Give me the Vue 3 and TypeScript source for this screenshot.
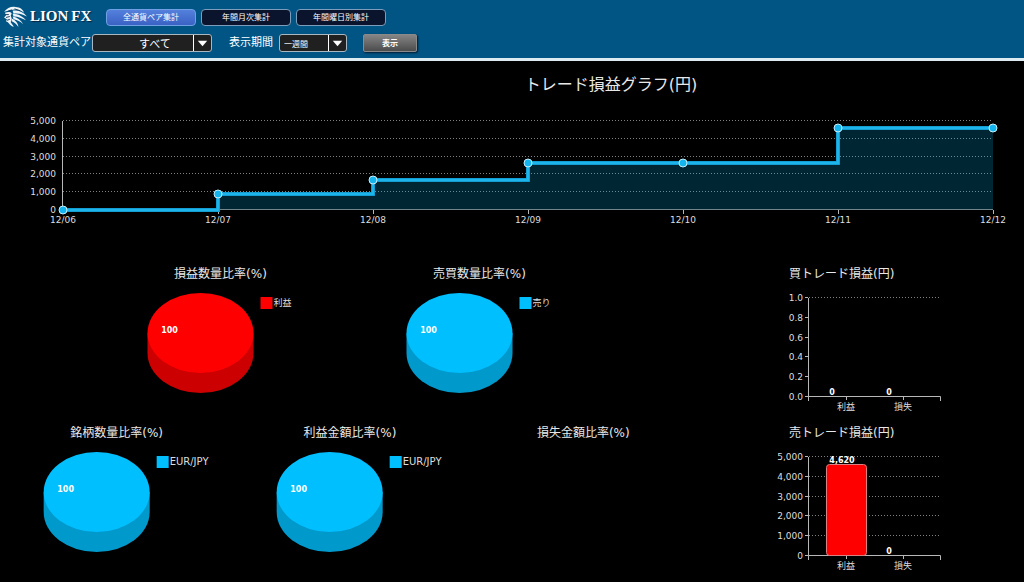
<script setup lang="ts">
import { ref } from 'vue'

interface Pie { title: string; legend?: string; color?: string; side?: string; latin?: boolean }
interface Bar { name: string; value: number; label: string }
interface BarChart { title: string; ticks: string[]; max: number; dottedTicks: boolean; bars: Bar[] }

const tabs = ['全通貨ペア集計', '年間月次集計', '年間曜日別集計']
const activeTab = ref(0)
const pair = ref('すべて')
const period = ref('一週間')

const days = ['12/06', '12/07', '12/08', '12/09', '12/10', '12/11', '12/12']
const profits = [0, 900, 1690, 2620, 2620, 4620, 4620]
const left = 63
const step = 155
const base = 113
const px = (i: number) => left + i * step
const py = (v: number) => Math.round(base - (v / 5000) * 89)
const points = profits.map((v, i) => ({ x: px(i), y: py(v), day: days[i] }))
const line = points.map((p, i) => (i === 0 ? `M${p.x} ${p.y}` : `H${p.x}V${p.y}`)).join('')
const area = `${line}V${base}H${left}Z`
const gridValues = [5000, 4000, 3000, 2000, 1000, 0]

const blue = { color: '#00bfff', side: '#0099cc' }
const pieRows: Pie[][] = [
  [
    { title: '損益数量比率(%)', legend: '利益', color: '#ff0000', side: '#cc0000' },
    { title: '売買数量比率(%)', legend: '売り', ...blue },
  ],
  [
    { title: '銘柄数量比率(%)', legend: 'EUR/JPY', latin: true, ...blue },
    { title: '利益金額比率(%)', legend: 'EUR/JPY', latin: true, ...blue },
    { title: '損失金額比率(%)' },
  ],
]

const barCharts: BarChart[] = [
  {
    title: '買トレード損益(円)',
    ticks: ['1.0', '0.8', '0.6', '0.4', '0.2', '0.0'],
    max: 1,
    dottedTicks: false,
    bars: [{ name: '利益', value: 0, label: '0' }, { name: '損失', value: 0, label: '0' }],
  },
  {
    title: '売トレード損益(円)',
    ticks: ['5,000', '4,000', '3,000', '2,000', '1,000', '0'],
    max: 5000,
    dottedTicks: true,
    bars: [{ name: '利益', value: 4620, label: '4,620' }, { name: '損失', value: 0, label: '0' }],
  },
]
const barHeight = (b: Bar, max: number) => Math.round((b.value / max) * 99)
const tickY = (i: number) => Math.round(16 + i * 19.8)
</script>

<template>
  <div class="page">
    <header class="bar">
      <div class="row top">
        <div class="logo">
          <svg class="lion" viewBox="0 0 26 22" aria-hidden="true">
            <g fill="#eef4f8">
              <path d="M1 6C4 2 9 0 13 1c5 0 8 3 9 6-4-3-8-4-12-3C6 4 4 6 1 6z" />
              <path d="M10 5c5-1 11 1 15 6-4-2-8-4-14-3z" />
              <path d="M10 8c6 0 11 3 14 7-4-2-8-4-13-4z" />
              <path d="M10 11c5 1 9 4 11 8-3-3-6-4-10-5z" />
              <path d="M9 13c4 2 7 5 7 9-2-3-4-5-7-6z" />
              <path d="M2 7c3-1 6-1 7 1l-1 2 1 3-1 4c1 2 3 3 3 5-3-1-5-4-6-5l-2-1 1-2-3-2 2-2z" />
            </g>
            <path d="M2 9l4 0M3 12l4-1M4 6l5-2M4 15l3-1M12 3l6 2" stroke="#1b3f5a" fill="none" />
          </svg>
          <span class="brand"><span>LION</span><span>FX</span></span>
        </div>
        <nav class="tabs">
          <button
            v-for="(t, i) in tabs"
            :key="t"
            type="button"
            class="tab"
            :class="{ active: i === activeTab }"
            @click="activeTab = i"
          >{{ t }}</button>
        </nav>
      </div>
      <form class="row filters" @submit.prevent>
        <label for="pair">集計対象通貨ペア</label>
        <span class="pick pair">
          <select id="pair" v-model="pair"><option>すべて</option></select>
          <svg class="arrow" viewBox="0 0 18 15" aria-hidden="true"><path d="M4 5h10l-5 6z" fill="#fff" /></svg>
        </span>
        <label class="period-label" for="period">表示期間</label>
        <span class="pick period">
          <select id="period" v-model="period"><option>一週間</option></select>
          <svg class="arrow" viewBox="0 0 18 15" aria-hidden="true"><path d="M4 5h10l-5 6z" fill="#fff" /></svg>
        </span>
        <button type="submit" class="show">表示</button>
      </form>
    </header>

    <main>
      <section class="trend">
        <h1>トレード損益グラフ(円)</h1>
        <svg class="line-chart" viewBox="0 0 1024 133" role="img" aria-label="トレード損益グラフ(円)">
          <path class="axis" d="M62.5 24V113" />
          <g v-for="v in gridValues" :key="v">
            <path v-if="v" class="dots" :d="`M63 ${py(v) - 0.5}H993`" />
            <text class="tick" x="56" :y="py(v) + 3" text-anchor="end">{{ v.toLocaleString('en-US') }}</text>
          </g>
          <path :d="area" fill="#00bfff" fill-opacity="0.2" />
          <path d="M63 112.5H993" stroke="#70868c" />
          <path v-for="p in points" :key="p.day" class="axis" :d="`M${p.x + 0.5} 113v4`" />
          <path :d="line" class="glow" />
          <path :d="line" class="series" />
          <g v-for="p in points" :key="p.day">
            <circle :cx="p.x" :cy="p.y" r="4" fill="#14b4ee" stroke="#c4efff" />
            <text class="tick" :x="p.x" y="126" text-anchor="middle">{{ p.day }}</text>
          </g>
        </svg>
      </section>

      <section v-for="(row, r) in pieRows" :key="r" class="charts">
        <div class="pies" :class="{ pair: row.length === 2 }">
          <figure v-for="p in row" :key="p.title">
            <figcaption>{{ p.title }}</figcaption>
            <svg v-if="p.legend" class="pie" viewBox="0 0 230 115" role="img" :aria-label="p.title">
              <path d="M42 51v20a53 40 0 0 0 106 0v-20z" :fill="p.side" />
              <ellipse cx="95" cy="51" rx="53" ry="40" :fill="p.color" />
              <text class="value" x="64" y="51" text-anchor="middle">100</text>
              <rect x="155" y="15" width="12" height="12" :fill="p.color" />
              <text class="legend" :class="{ latin: p.latin }" x="168" y="24">{{ p.legend }}</text>
            </svg>
          </figure>
        </div>
        <figure class="bars">
          <figcaption>{{ barCharts[r].title }}</figcaption>
          <svg viewBox="0 0 180 135" role="img" :aria-label="barCharts[r].title">
            <g v-for="(t, i) in barCharts[r].ticks" :key="t">
              <path v-if="i === 0 || (barCharts[r].dottedTicks && i < 5)" class="dots" :d="`M44 ${tickY(i) - 0.5}H175`" />
              <path class="axis" :d="`M40 ${tickY(i) - 0.5}h3`" />
              <text class="tick" x="38" :y="tickY(i) + 3" text-anchor="end">{{ t }}</text>
            </g>
            <path class="axis" d="M43.5 16V119M43 114.5H175.5V119M81.5 115v3M138.5 115v3" />
            <g v-for="(b, i) in barCharts[r].bars" :key="b.name">
              <rect
                v-if="b.value"
                :x="61.5 + i * 57"
                :y="114.5 - barHeight(b, barCharts[r].max)"
                width="40"
                :height="barHeight(b, barCharts[r].max)"
                rx="3"
                fill="#f00"
                stroke="#d98080"
              />
              <text class="value" :x="(b.value ? 77 : 67) + i * 57" :y="113 - barHeight(b, barCharts[r].max)" text-anchor="middle">{{ b.label }}</text>
              <text class="name" :x="81 + i * 57" y="128" text-anchor="middle">{{ b.name }}</text>
            </g>
          </svg>
        </figure>
      </section>
    </main>
  </div>
</template>

<style>
html,
body {
  margin: 0;
  background: #000;
}
</style>

<style scoped>
.page {
  color: #e8e8e8;
  background: #000;
  font-family: "DejaVu Sans", "Noto Sans CJK JP", sans-serif;
}
.bar {
  display: flex;
  flex-direction: column;
  gap: 6px;
  padding: 4px 0 6px 3px;
  background: #005585;
  border-bottom: 3px solid #dcebf0;
}
.row {
  display: flex;
  align-items: center;
}
.top {
  height: 24px;
  gap: 15px;
}
.logo {
  display: flex;
  align-items: center;
  gap: 2px;
  width: 88px;
}
.lion {
  flex: none;
  width: 25px;
  height: 21px;
}
.brand {
  display: flex;
  gap: 3px;
  color: #fff;
  font: bold 15px/20px "Liberation Serif", serif;
  text-shadow: 1px 1px 1px #00233c;
}
.tabs {
  display: flex;
  gap: 5px;
  padding-top: 2px;
}
button,
select {
  box-sizing: border-box;
  margin: 0;
  color: #fff;
  font-family: "Noto Sans", "Noto Sans CJK JP", sans-serif;
}
.tab {
  width: 90px;
  height: 17px;
  padding: 0;
  border: 1px solid #7d9dbd;
  border-radius: 4px;
  background: #0a142c;
  font-size: 8px;
  line-height: 14px;
}
.tab.active {
  border-color: #6fa0e4;
  background: linear-gradient(#5480dc, #3a62c4);
}
.filters {
  height: 18px;
  color: #fff;
  font-size: 11px;
  line-height: 18px;
  white-space: nowrap;
}
.pick {
  position: relative;
  display: flex;
  height: 18px;
}
.pick select {
  width: 100%;
  height: 18px;
  appearance: none;
  border: 1px solid #a9b8c0;
  border-radius: 3px;
  background: #202020;
}
.pair.pick {
  width: 120px;
  margin-left: 1px;
}
.pair select {
  padding: 0 18px 0 46px;
  font-size: 11px;
}
.period.pick {
  width: 68px;
  margin-left: 6px;
}
.period select {
  padding: 0 18px 0 4px;
  font-size: 8px;
}
.arrow {
  position: absolute;
  top: 1px;
  right: 1px;
  width: 18px;
  height: 16px;
  border-left: 1px solid #fff;
  box-sizing: border-box;
  pointer-events: none;
}
.period-label {
  margin-left: 17px;
}
.show {
  width: 54px;
  height: 18px;
  margin-left: 16px;
  padding: 0;
  border: 1px solid #8a8a8a;
  border-radius: 2px;
  background: linear-gradient(#858585, #4c4c4c);
  box-shadow: 1px 1px 2px #001c30;
  font-size: 8px;
  font-weight: bold;
  line-height: 16px;
}
h1 {
  margin: 0;
  padding: 12px 0 0 198px;
  font-size: 16px;
  font-weight: normal;
  line-height: 24px;
  text-align: center;
}
svg {
  display: block;
}
.line-chart {
  width: 100%;
  height: auto;
}
.axis {
  fill: none;
  stroke: #b8b8b8;
}
.dots {
  fill: none;
  stroke: #808080;
  stroke-dasharray: 1 2;
}
.series {
  fill: none;
  stroke: #1cb4ea;
  stroke-width: 3;
}
.glow {
  fill: none;
  stroke: #0a86b6;
  stroke-width: 4;
}
text {
  fill: #dedede;
  font-family: "DejaVu Sans", "Noto Sans CJK JP", sans-serif;
  font-size: 9px;
}
text.value {
  fill: #fff;
  font-size: 8px;
  font-weight: bold;
}
text.latin {
  font-size: 10px;
}
.charts {
  display: grid;
  grid-template-columns: 700fr 324fr;
  padding-top: 6px;
}
.trend {
  padding-bottom: 28px;
}
figure {
  flex: 1;
  min-width: 0;
  margin: 0;
}
figcaption {
  padding-top: 2px;
  font-size: 12px;
  line-height: 16px;
  text-align: center;
  white-space: nowrap;
}
.pies {
  display: flex;
  justify-content: center;
}
.pies.pair figure {
  flex: 0 0 37%;
}
.pie {
  width: 100%;
  height: 115px;
}
.bars {
  padding-left: 65px;
}
.bars figcaption {
  padding-left: 24px;
  text-align: left;
}
.bars svg {
  width: 180px;
  height: 135px;
}
</style>
